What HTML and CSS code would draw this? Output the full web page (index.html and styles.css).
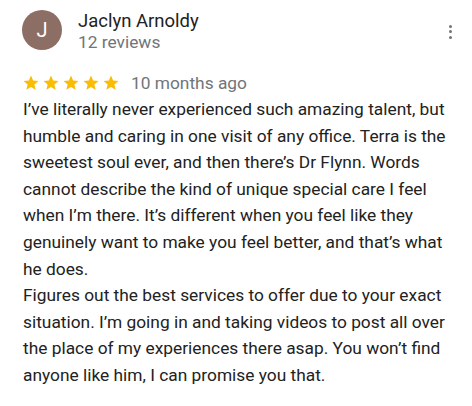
FILE: index.html
```html
<!DOCTYPE html>
<html>
<head>
<meta charset="utf-8">
<link rel="stylesheet" href="styles.css">
</head>
<body>
<div class="review">
  <div class="header">
    <div class="avatar">J</div>
    <div class="who">
      <div class="name">Jaclyn Arnoldy</div>
      <div class="count">12 reviews</div>
    </div>
    <div class="menu"><span></span><span></span><span></span></div>
  </div>
  <div class="rating">
    <div class="stars">
      <svg viewBox="0 0 24 24" class="star"><path d="M12 17.27L18.18 21l-1.64-7.03L22 9.24l-7.19-.61L12 2 9.19 8.63 2 9.24l5.46 4.73L5.82 21z"/></svg>
      <svg viewBox="0 0 24 24" class="star"><path d="M12 17.27L18.18 21l-1.64-7.03L22 9.24l-7.19-.61L12 2 9.19 8.63 2 9.24l5.46 4.73L5.82 21z"/></svg>
      <svg viewBox="0 0 24 24" class="star"><path d="M12 17.27L18.18 21l-1.64-7.03L22 9.24l-7.19-.61L12 2 9.19 8.63 2 9.24l5.46 4.73L5.82 21z"/></svg>
      <svg viewBox="0 0 24 24" class="star"><path d="M12 17.27L18.18 21l-1.64-7.03L22 9.24l-7.19-.61L12 2 9.19 8.63 2 9.24l5.46 4.73L5.82 21z"/></svg>
      <svg viewBox="0 0 24 24" class="star"><path d="M12 17.27L18.18 21l-1.64-7.03L22 9.24l-7.19-.61L12 2 9.19 8.63 2 9.24l5.46 4.73L5.82 21z"/></svg>
    </div>
    <span class="date">10 months ago</span>
  </div>
  <p class="text">I’ve literally never experienced such amazing talent, but humble and caring in one visit of any office. Terra is the sweetest soul ever, and then there’s Dr Flynn. Words cannot describe the kind of unique special care I feel when I’m there. It’s different when you feel like they genuinely want to make you feel better, and that’s what he does.<br>Figures out the best services to offer due to your exact situation. I’m going in and taking videos to post all over the place of my experiences there asap. You won’t find anyone like him, I can promise you that.</p>
</div>
</body>
</html>
```

FILE: styles.css
```css
html, body {
  margin: 0;
  padding: 0;
  background: #ffffff;
}
body {
  font-family: Roboto, "Liberation Sans", sans-serif;
  color: #222222;
}
.review {
  padding: 10px 20px 0 23px;
}
.header {
  display: flex;
  align-items: flex-start;
}
.avatar {
  width: 40px;
  height: 40px;
  border-radius: 50%;
  background: #8c6e64;
  color: #ffffff;
  font-size: 20px;
  display: flex;
  align-items: center;
  justify-content: center;
  flex: none;
  margin-left: -1px;
}
.who {
  margin-left: 16px;
  flex: 1;
}
.name {
  font-size: 18.5px;
  line-height: 22px;
  color: #222222;
}
.count {
  font-size: 17.33px;
  line-height: 21px;
  color: #70757a;
}
.menu {
  display: flex;
  flex-direction: column;
  gap: 2.5px;
  margin-top: 14.5px;
}
.menu span {
  width: 3px;
  height: 3px;
  background: #70757a;
  border-radius: 50%;
}
.rating {
  display: flex;
  align-items: center;
  margin-top: 20px;
}
.stars {
  display: flex;
  gap: 2px;
  margin-left: -1px;
}
.star {
  width: 18px;
  height: 18px;
  fill: #fbbc04;
}
.date {
  margin-left: 11px;
  font-size: 17.33px;
  color: #70757a;
}
.text {
  margin: 3px 0 0 0;
  font-size: 17.33px;
  line-height: 26.6px;
  color: #222222;
}
```
